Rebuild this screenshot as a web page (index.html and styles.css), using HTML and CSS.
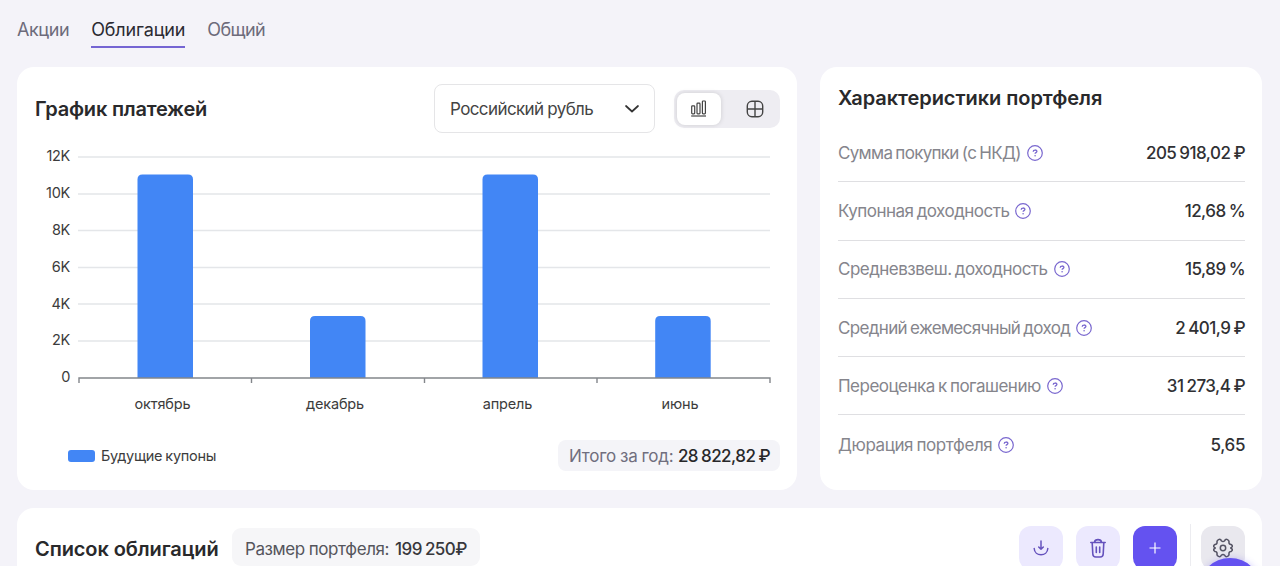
FILE: index.html
```html
<!DOCTYPE html>
<html lang="ru">
<head>
<meta charset="utf-8">
<title>Портфель облигаций</title>
<link rel="stylesheet" href="styles.css">
</head>
<body>
<svg class="sprite" width="0" height="0" aria-hidden="true">
  <symbol id="help" viewBox="0 0 16 16"><circle cx="8" cy="8" r="7.3" fill="none" stroke="#7967cf" stroke-width="1.2"/><path d="M6.2 6.700c0-2.200 3.700-2.200 3.700-.2 0 1.100-1.800 1.200-1.800 2.300" fill="none" stroke="#7967cf" stroke-width="1.3"/><circle cx="8.1" cy="10.800" r=".8" fill="#7967cf"/></symbol>
</svg>
<nav class="tabs">
  <a class="tab">Акции</a>
  <a class="tab tab-active">Облигации</a>
  <a class="tab tab-last">Общий</a>
</nav>
<main class="page">
  <div class="top">
    <section class="card chart-card">
      <header class="chart-head">
        <h2 class="title">График платежей</h2>
        <div class="select"><span class="select-text">Российский рубль</span>
          <svg width="16" height="10" viewBox="0 0 16 10"><path d="M2 2l6 5.500 6-5.500" fill="none" stroke="#333" stroke-width="1.7" stroke-linecap="round" stroke-linejoin="round"/></svg>
        </div>
        <div class="switch">
          <div class="switch-item switch-on"><svg width="18" height="18" viewBox="0 0 18 18" fill="none" stroke="#444" stroke-width="1.2"><rect x="1.700" y="5.800" width="3" height="8" rx=".7"/><rect x="7" y="3.200" width="3" height="10.600" rx=".7"/><rect x="12.400" y="1" width="3" height="12.800" rx=".7"/><path d="M1.200 16h14.800"/></svg></div>
          <div class="switch-item"><svg width="18" height="18" viewBox="0 0 18 18" fill="none" stroke="#444" stroke-width="1.4"><rect x="1.3" y="1.3" width="15.4" height="15.4" rx="4.6"/><path d="M9 1.3v15.4M1.3 9h15.4"/></svg></div>
        </div>
      </header>
      <svg class="chart" width="780" height="280" viewBox="17 140 780 280">
        <path class="grid" d="M78 157h692M78 194h692M78 230.5h692M78 267.5h692M78 304h692M78 341h692"/>
        <g class="bars">
          <path d="M137.500 378V179.500q0-5 5-5h45.500q5 0 5 5V378z"/>
          <path d="M310 378V321q0-5 5-5h45.500q5 0 5 5V378z"/>
          <path d="M482.500 378V179.500q0-5 5-5h45.500q5 0 5 5V378z"/>
          <path d="M655.200 378V321q0-5 5-5h45.500q5 0 5 5V378z"/>
        </g>
        <path class="axis" d="M79 383v-5h691v5M251.500 378v5M424.500 378v5M597 378v5"/>
        <g class="y-labels">
          <text x="70" y="161">12K</text><text x="70" y="198">10K</text><text x="70" y="235">8K</text><text x="70" y="272">6K</text><text x="70" y="308.500">4K</text><text x="70" y="345">2K</text><text x="70" y="382">0</text>
        </g>
        <g class="x-labels">
          <text x="162.500" y="409">октябрь</text><text x="335" y="409">декабрь</text><text x="507.500" y="409">апрель</text><text x="680" y="409">июнь</text>
        </g>
      </svg>
      <footer class="chart-foot">
        <span class="swatch"></span><span class="legend">Будущие купоны</span>
        <span class="total"><span class="total-label">Итого за год:</span><span class="total-value">28 822,82 ₽</span></span>
      </footer>
    </section>
    <section class="card stats">
      <h2 class="title stats-title">Характеристики портфеля</h2>
      <div class="row row-purchase"><span class="name">Сумма покупки (с НКД)</span><svg class="help"><use href="#help"/></svg><span class="value">205 918,02 ₽</span></div>
      <div class="row"><span class="name">Купонная доходность</span><svg class="help"><use href="#help"/></svg><span class="value">12,68 %</span></div>
      <div class="row"><span class="name">Средневзвеш. доходность</span><svg class="help"><use href="#help"/></svg><span class="value">15,89 %</span></div>
      <div class="row row-monthly"><span class="name">Средний ежемесячный доход</span><svg class="help"><use href="#help"/></svg><span class="value">2 401,9 ₽</span></div>
      <div class="row"><span class="name">Переоценка к погашению</span><svg class="help"><use href="#help"/></svg><span class="value">31 273,4 ₽</span></div>
      <div class="row row-duration"><span class="name">Дюрация портфеля</span><svg class="help"><use href="#help"/></svg><span class="value">5,65</span></div>
    </section>
  </div>
  <section class="card list">
    <h2 class="title list-title">Список облигаций</h2>
    <span class="size"><span class="size-label">Размер портфеля:</span><span class="size-value">199 250₽</span></span>
    <div class="actions">
      <div class="btn"><svg width="18" height="18" viewBox="0 0 18 18" fill="none" stroke="#6552bd" stroke-width="1.5" stroke-linecap="round" stroke-linejoin="round"><path d="M9 2v8.200M6.700 8L9 10.300 11.300 8M2.200 9.500c.4 8.300 13.200 8.300 13.600 0"/></svg></div>
      <div class="btn"><svg width="18" height="20" viewBox="0 0 18 20" fill="none" stroke="#6552bd" stroke-width="1.600" stroke-linecap="round" stroke-linejoin="round"><path d="M1.800 4.500h14.400M5.500 4.200C6 .7 12 .7 12.500 4.200M3.200 4.800l.6 11.200q.2 3 3 3h4.400q2.800 0 3-3l.6-11.200M7.300 9v5.500M10.700 9v5.500"/></svg></div>
      <div class="btn btn-add"><svg width="12" height="12" viewBox="0 0 12 12"><path d="M6 .5v11M.5 6h11" stroke="#fff" stroke-width="1.200"/></svg></div>
      <span class="divider"></span>
      <div class="btn btn-settings"><svg width="20" height="20" viewBox="0 0 20 20" fill="none" stroke="#555464" stroke-width="1.500" stroke-linejoin="round"><circle cx="10" cy="10" r="2.700"/><path d="M5.500 1.600Q7.600.8 8.300 2.700 10 4.300 11.700 2.700 12.400.8 14.500 1.600q2 1 1.400 2.800.2 2 2 2Q19.400 7.400 19.400 8.200 19.200 9.200 17.700 10q1.500.8 1.700 1.800 0 .8-1.500 1.800-1.800 0-2 2 .6 1.800-1.400 2.800-2.100.8-2.800-1.100-1.700-1.600-3.400 0-.7 1.900-2.800 1.100-2-1-1.400-2.800-.2-2-2-2Q.6 12.600.6 11.800.8 10.800 2.300 10 .8 9.200.6 8.200q0-.8 1.500-1.800 1.800 0 2-2-.6-1.800 1.400-2.800z"/></svg></div>
    </div>
  </section>
</main>
<div class="fab-area"><div class="fab"></div></div>
</body>
</html>
```
FILE: styles.css
```css
* { box-sizing: border-box; }
body { margin: 0; width: 1280px; height: 566px; overflow: hidden; background: #f4f3f9; font-family: Inter, "Liberation Sans", sans-serif; color: #29292b; }
.sprite { position: absolute; }
.tabs { display: flex; height: 67px; padding: 16px 0 0 17px; gap: 22px; align-items: flex-start; }
.tab { height: 32px; font-size: 18px; line-height: 28px; color: #6d6b7b; letter-spacing: -.4px; white-space: nowrap; }
.tab-active { color: #2b2a32; border-bottom: 2px solid #7565d3; letter-spacing: -.15px; }
.tab-last { letter-spacing: -.6px; }
.page { display: flex; flex-direction: column; gap: 18px; padding: 0 18px 0 17px; }
.top { display: flex; gap: 23px; height: 423px; }
.card { background: #fff; border-radius: 17px; }
.title { margin: 0; font-size: 20px; line-height: 26px; font-weight: 600; letter-spacing: -.22px; white-space: nowrap; }
.chart-card { width: 780px; display: flex; flex-direction: column; }
.chart-head { display: flex; align-items: center; height: 73px; padding: 10px 17px 0 18px; }
.select { margin-left: auto; width: 221px; height: 49px; border: 1px solid #e5e5e7; border-radius: 8px; display: flex; justify-content: space-between; align-items: center; padding: 0 14px 0 15px; }
.select-text { font-size: 17px; color: #444; letter-spacing: -.6px; word-spacing: -.500px; white-space: nowrap; }
.switch { margin-left: 19px; width: 106px; height: 38px; border-radius: 10px; background: #eeedf2; padding: 3px; display: flex; gap: 13px; }
.switch-item { width: 44px; display: flex; justify-content: center; align-items: center; }
.switch-on { background: #fff; border-radius: 8px; box-shadow: 0 0 5px rgba(0,0,0,.14); }
.chart { display: block; flex: none; font-size: 14.500px; }
.grid { stroke: #e4e6e9; stroke-width: 1.500; fill: none; }
.axis { stroke: #83868b; stroke-width: 1.400; fill: none; }
.bars { fill: #4286f5; }
.y-labels { text-anchor: end; fill: #3c3c3c; letter-spacing: -.3px; }
.x-labels { text-anchor: middle; fill: #3c3c3c; letter-spacing: -.15px; }
.chart-foot { display: flex; align-items: center; height: 31px; margin-top: 20px; padding: 0 17px 0 51px; }
.swatch { width: 27px; height: 12px; border-radius: 3px; background: #4286f5; }
.legend { margin-left: 6px; font-size: 14.500px; color: #3c3c3c; letter-spacing: -.3px; word-spacing: -.600px; }
.total { margin-left: auto; width: 222px; height: 31px; border-radius: 8px; background: #f4f4f8; display: flex; align-items: center; justify-content: space-between; padding: 0 10px 0 11px; font-size: 17px; white-space: nowrap; }
.total-label { color: #706e7e; letter-spacing: -.25px; word-spacing: -.500px; }
.total-value { color: #28282a; font-weight: 500; letter-spacing: -.55px; word-spacing: -.900px; }
.stats { width: 443px; padding: 18px 17px 0 18px; }
.row { display: flex; align-items: center; height: 58.300px; border-bottom: 1px solid #dfdfe2; font-size: 17px; white-space: nowrap; }
.row:last-child { border-bottom: 0; }
.stats-title { margin-bottom: 13px; letter-spacing: -.05px; }
.name { color: #85858c; letter-spacing: -.52px; word-spacing: -1px; }
.row-purchase .name { letter-spacing: -.69px; }
.row-monthly .name { letter-spacing: -.66px; }
.row-duration .name { letter-spacing: -.41px; }
.help { width: 16px; height: 16px; margin-left: 6px; }
.value { margin-left: auto; color: #303033; font-weight: 500; letter-spacing: -.55px; word-spacing: -.900px; }
.row-duration .value { letter-spacing: -.4px; }
.list { height: 58px; border-radius: 17px 17px 0 0; display: flex; align-items: flex-start; padding: 18px 17px 0 18px; overflow: hidden; }
.list-title { margin-top: 10px; width: 197px; letter-spacing: -.1px; }
.size { width: 248px; height: 38px; margin-top: 2px; padding: 0 13px; border-radius: 9px; background: #f6f6f8; display: flex; justify-content: space-between; align-items: flex-start; line-height: 42px; font-size: 17px; white-space: nowrap; }
.size-label { color: #55555c; letter-spacing: -.4px; word-spacing: -.500px; }
.size-value { color: #38383c; font-weight: 500; letter-spacing: -.5px; word-spacing: -1px; }
.actions { margin-left: auto; display: flex; gap: 13px; }
.btn { width: 44px; height: 44px; border-radius: 12px; background: #ece9fe; display: flex; align-items: center; justify-content: center; }
.btn-add { background: #6452f0; }
.divider { width: 1px; height: 48px; margin: -2px -3px 0 0; background: #ececf0; }
.btn-settings { background: #e9e8ee; }
.fab-area { position: absolute; right: 0; bottom: 0; width: 100px; height: 26px; overflow: hidden; }
.fab { width: 62px; height: 62px; margin: 18px 0 0 19px; border-radius: 50%; background: #6452f0; box-shadow: 0 0 7px rgba(100,82,240,.3); }
```
